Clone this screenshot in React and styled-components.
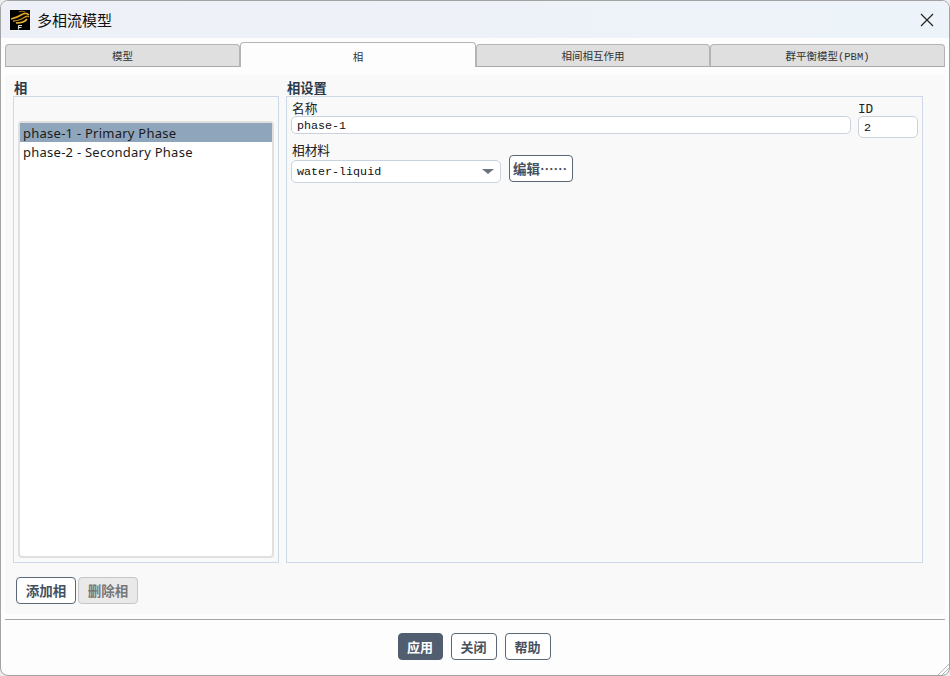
import React from 'react'
import styled, {createGlobalStyle} from 'styled-components'

const cjk = `"Liberation Mono", "Noto Sans CJK SC", monospace`

const GlobalStyle = createGlobalStyle`
  html, body {
    margin: 0;
    padding: 0;
    background: #ececec;
  }
`

const Window = styled.div`
  box-sizing: border-box;
  position: relative;
  width: 950px;
  height: 676px;
  display: flex;
  flex-direction: column;
  background: #fdfdfd;
  border: 1px solid #a3a3a3;
  border-radius: 8px;
  overflow: hidden;
  font-family: ${cjk};
  color: #1d2733;
`

const TitleBar = styled.div`
  height: 37px;
  flex: none;
  display: flex;
  align-items: center;
  padding: 0 15px 0 9px;
  background: linear-gradient(90deg, #eef0f7, #edf4f9);
`

const Title = styled.div`
  flex: 1;
  margin-left: 7px;
  font: 15px "Noto Sans CJK SC", sans-serif;
  color: #111;
`

const TabStrip = styled.div`
  flex: none;
  display: grid;
  grid-template-columns: 235px 236px 234px 235px;
  margin: 4px 4px 0;
  height: 25px;
`

const Tab = styled.div`
  box-sizing: border-box;
  display: flex;
  align-items: center;
  justify-content: center;
  margin-top: ${({active}) => (active ? 0 : 2)}px;
  padding-top: ${({active}) => (active ? 2 : 0)}px;
  font-size: 10.5px;
  color: #333;
  background: ${({active}) => (active ? '#fdfdfd' : '#dfdfdf')};
  border: 1px solid #b4b4b4;
  border-bottom: ${({active}) => (active ? 'none' : '1px solid #a8a8a8')};
  border-radius: 4px 4px 0 0;
`

const Panel = styled.div`
  flex: none;
  box-sizing: border-box;
  height: 539px;
  margin: 8px 4px 0;
  padding: 8px 8px 0;
  background: #f9f9f9;
`

const Columns = styled.div`
  display: grid;
  grid-template-columns: 266px 637px;
  gap: 7px;
`

const Section = styled.div`
  display: flex;
  flex-direction: column;
`

const SectionTitle = styled.div`
  height: 13px;
  line-height: 14px;
  font-size: 13.3px;
  font-weight: 700;
  color: #2c3a49;
  padding-left: 1px;
`

const GroupBox = styled.div`
  box-sizing: border-box;
  height: 467px;
  border: 1px solid #cfd8e6;
  padding: ${({list}) => (list ? '24px 4px 4px' : '4px 4px 0')};
`

const List = styled.div`
  box-sizing: border-box;
  height: 100%;
  background: #fff;
  border: 2px solid #e0e0e0;
  border-radius: 4px;
`

const ListRow = styled.div`
  height: 19px;
  padding-left: 3px;
  font: 13px/21px "Noto Sans", sans-serif;
  letter-spacing: 0.25px;
  color: #1a1a1a;
  background: ${({selected}) => (selected ? '#8fa5bb' : 'transparent')};
`

const FieldRow = styled.div`
  display: flex;
  gap: ${({gap}) => gap || 7}px;
  align-items: flex-start;
  margin-top: ${({top}) => top || 0}px;
`

const Field = styled.div`
  display: flex;
  flex-direction: column;
  flex: ${({grow}) => (grow ? 1 : 'none')};
  width: ${({w}) => (w ? `${w}px` : 'auto')};
`

const Label = styled.div`
  height: 15px;
  line-height: 17px;
  font-size: 12.7px;
  color: #222;
  padding-left: ${({flush}) => (flush ? 0 : 1)}px;
`

const Input = styled.div`
  box-sizing: border-box;
  height: ${({h}) => h}px;
  line-height: ${({h}) => h}px;
  background: #fff;
  border: 1px solid #c9d2de;
  border-radius: 5px;
  padding-left: 5px;
  font-size: 11.7px;
  color: #111;
`

const Select = styled(Input)`
  position: relative;
  margin-top: 2px;
`

const Caret = styled.span`
  position: absolute;
  right: 6px;
  top: 8px;
  border-left: 6px solid transparent;
  border-right: 6px solid transparent;
  border-top: 5px solid #6a7480;
`

const Button = styled.button`
  box-sizing: border-box;
  width: ${({w}) => w}px;
  height: 27px;
  padding: 0 0 1px;
  font-family: ${cjk};
  font-size: ${({size}) => size || 13.5}px;
  font-weight: 700;
  border-radius: 4px;
  color: ${({primary, disabled}) =>
    primary ? '#fff' : disabled ? '#777' : '#45515f'};
  background: ${({primary, disabled}) =>
    primary ? '#505e70' : disabled ? '#e9e9e9' : '#fff'};
  border: 1px solid
    ${({primary, disabled}) =>
      primary ? '#505e70' : disabled ? '#c6c6c6' : '#5a6777'};
`

const EditButton = styled(Button)`
  margin-top: 12px;
  text-align: left;
  padding-left: 3px;
`

const Dots = styled.span`
  font-family: "Noto Sans CJK SC", sans-serif;
  font-weight: 700;
`

const PanelActions = styled.div`
  display: flex;
  gap: 2px;
  margin: 14px 0 0 3px;
`

const Divider = styled.div`
  flex: none;
  height: 1px;
  margin: 5px 4px 0;
  background: #a6a6a6;
`

const Footer = styled.div`
  flex: 1;
  display: flex;
  justify-content: center;
  gap: 8px;
  padding: 13px 2px 0 0;
`

const Grip = styled.svg`
  position: absolute;
  right: 0;
  bottom: 0;
`

const Logo = () => (
  <svg width="20" height="20" viewBox="0 0 20 20">
    <rect width="20" height="20" fill="#000" />
    <path d="M1 9c4-1 7-2 10-4 3-2 6-2 8 0" stroke="#e3a92b" strokeWidth="1.6" fill="none" />
    <path d="M3 11c5 0 9-2 12-4 2-1 3-1 4 0" stroke="#c98d1c" strokeWidth="1.5" fill="none" />
    <path d="M6 13c5 0 9-1 11-4" stroke="#e8b53a" strokeWidth="1.5" fill="none" />
    <path d="M9 2c2-1 4-1 6 0" stroke="#9c6c12" strokeWidth="1.2" fill="none" />
    <path d="M8.5 15.5h3.5M8.5 15.5v4M8.5 17.5h3" stroke="#ddd" strokeWidth="1.2" fill="none" />
  </svg>
)

const CloseIcon = () => (
  <svg width="14" height="14" viewBox="0 0 14 14">
    <path d="M1 1l12 12M13 1l-12 12" stroke="#222" strokeWidth="1.2" />
  </svg>
)

const tabs = ['模型', '相', '相间相互作用', '群平衡模型(PBM)']

const App = () => (
  <>
    <GlobalStyle />
    <Window>
      <TitleBar>
        <Logo />
        <Title>多相流模型</Title>
        <CloseIcon />
      </TitleBar>
      <TabStrip>
        {tabs.map(t => (
          <Tab key={t} active={t === '相'}>
            {t}
          </Tab>
        ))}
      </TabStrip>
      <Panel>
        <Columns>
          <Section>
            <SectionTitle>相</SectionTitle>
            <GroupBox list>
              <List>
                <ListRow selected>phase-1 - Primary Phase</ListRow>
                <ListRow>phase-2 - Secondary Phase</ListRow>
              </List>
            </GroupBox>
          </Section>
          <Section>
            <SectionTitle>相设置</SectionTitle>
            <GroupBox>
              <FieldRow>
                <Field grow>
                  <Label>名称</Label>
                  <Input h={18}>phase-1</Input>
                </Field>
                <Field w={60}>
                  <Label flush>ID</Label>
                  <Input h={22}>2</Input>
                </Field>
              </FieldRow>
              <FieldRow gap={8} top={5}>
                <Field w={210}>
                  <Label>相材料</Label>
                  <Select h={23}>
                    water-liquid
                    <Caret />
                  </Select>
                </Field>
                <EditButton w={64}>
                  编辑<Dots>……</Dots>
                </EditButton>
              </FieldRow>
            </GroupBox>
          </Section>
        </Columns>
        <PanelActions>
          <Button w={60}>添加相</Button>
          <Button w={60} disabled>
            删除相
          </Button>
        </PanelActions>
      </Panel>
      <Divider />
      <Footer>
        <Button w={45} size={13} primary>
          应用
        </Button>
        <Button w={46} size={13}>
          关闭
        </Button>
        <Button w={46} size={13}>
          帮助
        </Button>
      </Footer>
      <Grip width="12" height="12" viewBox="0 0 12 12">
        <path d="M1 12L12 1M5 12l7-7M9 12l3-3" stroke="#b5b5b5" />
      </Grip>
    </Window>
  </>
)

export default App
